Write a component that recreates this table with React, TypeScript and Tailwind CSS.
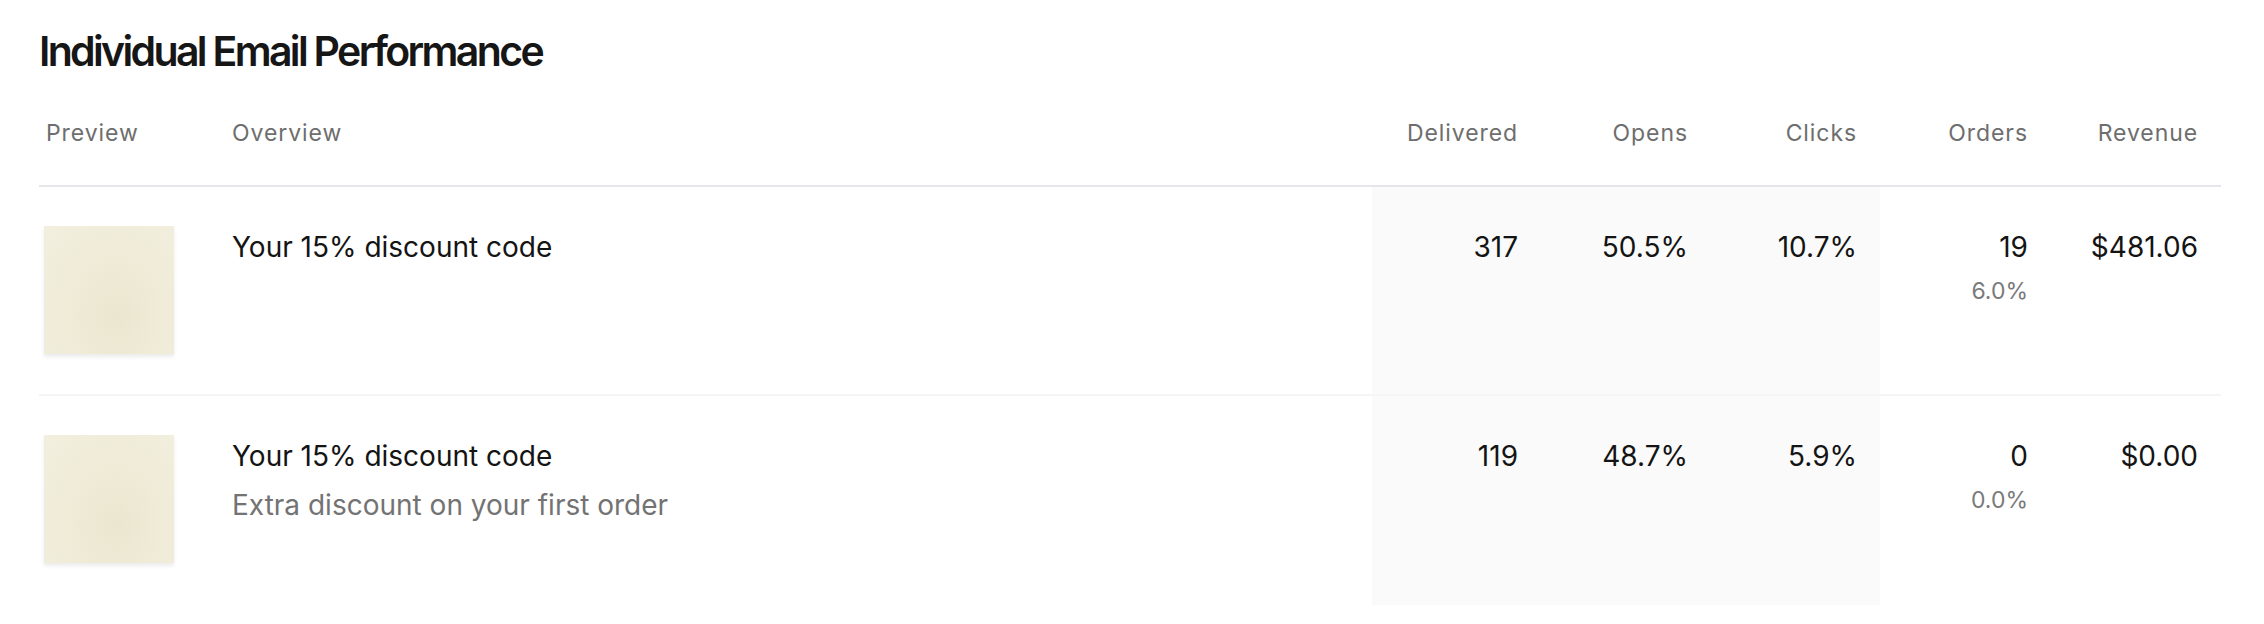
import React from 'react';

type Row = {
  title: string;
  subtitle?: string;
  delivered: string;
  opens: string;
  clicks: string;
  orders: string;
  orderRate: string;
  revenue: string;
};

const rows: Row[] = [
  {
    title: 'Your 15% discount code',
    delivered: '317',
    opens: '50.5%',
    clicks: '10.7%',
    orders: '19',
    orderRate: '6.0%',
    revenue: '$481.06',
  },
  {
    title: 'Your 15% discount code',
    subtitle: 'Extra discount on your first order',
    delivered: '119',
    opens: '48.7%',
    clicks: '5.9%',
    orders: '0',
    orderRate: '0.0%',
    revenue: '$0.00',
  },
];

const cols = 'grid grid-cols-[186px_1fr_169px_170px_169px_171px_170px]';

const Thumb: React.FC = () => (
  <div className="w-[130px] h-[128px] bg-[radial-gradient(ellipse_at_55%_70%,#ebe6cf_0%,#efebd7_45%,#f2efdf_100%)] shadow-[0_3px_4px_rgba(0,0,0,0.08)]" />
);

const App: React.FC = () => {
  return (
    <div
      className="min-h-screen bg-white pt-[27px] pl-[39px] pr-[43px] text-[#141414]"
      style={{ fontFamily: 'Inter, "Noto Sans", sans-serif' }}
    >
      {/* Title */}
      <h1 className="text-[41px] leading-[48px] font-semibold tracking-[-0.065em] text-[#161616]">
        Individual Email Performance
      </h1>

      {/* Table header */}
      <div className={`${cols} mt-[43px] border-b-2 border-[#e6e6ea] pb-[37px] text-[23px] leading-[30px] text-[#6e6e6e] tracking-[0.04em]`}>
        <div className="pl-[7px]">Preview</div>
        <div className="pl-[7px]">Overview</div>
        <div className="text-right pr-[23px]">Delivered</div>
        <div className="text-right pr-[23px]">Opens</div>
        <div className="text-right pr-[23px]">Clicks</div>
        <div className="text-right pr-[23px]">Orders</div>
        <div className="text-right pr-[23px]">Revenue</div>
      </div>

      {/* Rows */}
      {rows.map((r, i) => (
        <div
          key={i}
          className={`${cols} h-[209px] text-[28px] leading-[34px] ${
            i < rows.length - 1 ? 'border-b-2 border-[#f5f5f5]' : ''
          }`}
        >
          <div className="pl-[5px] pt-[39px]">
            <Thumb />
          </div>
          <div className="pl-[7px] pt-[43px]">
            <div className="text-[#141414]">{r.title}</div>
            {r.subtitle && (
              <div className="mt-[15px] text-[#737373]">{r.subtitle}</div>
            )}
          </div>
          <div className="bg-[#fafafa] text-right pr-[23px] pt-[43px]">{r.delivered}</div>
          <div className="bg-[#fafafa] text-right pr-[23px] pt-[43px]">{r.opens}</div>
          <div className="bg-[#fafafa] text-right pr-[23px] pt-[43px]">{r.clicks}</div>
          <div className="text-right pr-[23px] pt-[43px]">
            <div>{r.orders}</div>
            <div className="mt-[12px] text-[23px] leading-[30px] text-[#7a7a7a]">{r.orderRate}</div>
          </div>
          <div className="text-right pr-[23px] pt-[43px]">{r.revenue}</div>
        </div>
      ))}
    </div>
  );
};

export default App;
